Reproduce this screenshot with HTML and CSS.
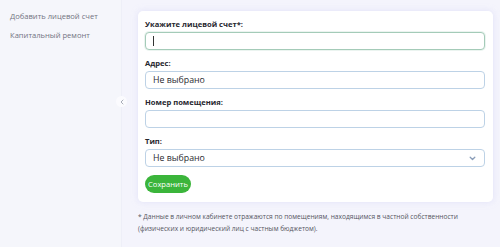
FILE: index.html
```html
<!DOCTYPE html>
<html lang="ru">
<head>
<meta charset="utf-8">
<link rel="stylesheet" href="styles.css">
</head>
<body>
<div class="layout">
  <aside class="sidebar">
    <a class="nav-item">Добавить лицевой счет</a>
    <a class="nav-item">Капитальный ремонт</a>
    <button class="collapse" type="button" aria-label="Свернуть">
      <svg width="6" height="6" viewBox="0 0 6 6"><path d="M4 1 L2 3 L4 5" fill="none" stroke="#a9adb8" stroke-width="1" stroke-linecap="round" stroke-linejoin="round"/></svg>
    </button>
  </aside>
  <main class="main">
    <form class="card">
      <div class="field">
        <label class="label">Укажите лицевой счет*:</label>
        <div class="input focused"><span class="caret"></span></div>
      </div>
      <div class="field">
        <label class="label">Адрес:</label>
        <div class="input">Не выбрано</div>
      </div>
      <div class="field">
        <label class="label">Номер помещения:</label>
        <div class="input"></div>
      </div>
      <div class="field">
        <label class="label">Тип:</label>
        <div class="input select">
          <span>Не выбрано</span>
          <svg class="chevron" width="7" height="5" viewBox="0 0 7 5"><path d="M1.2 1.2 L3.5 3.5 L5.8 1.2" fill="none" stroke="#8a9db8" stroke-width="1.3" stroke-linecap="round" stroke-linejoin="round"/></svg>
        </div>
      </div>
      <button class="save" type="button">Сохранить</button>
    </form>
    <p class="note">* Данные в личном кабинете отражаются по помещениям, находящимся в частной собственности<br>(физических и юридический лиц с частным бюджетом).</p>
  </main>
</div>
</body>
</html>
```

FILE: styles.css
```css
* { box-sizing: border-box; }
html, body { margin: 0; padding: 0; }
body {
  font-family: "Open Sans", "Noto Sans", sans-serif;
  color: #2b2b33;
  background: #f4f4fc;
  width: 500px;
  height: 247px;
  overflow: hidden;
}
.layout {
  display: flex;
  height: 247px;
}
.sidebar {
  position: relative;
  width: 122px;
  flex: none;
  background: #f5f6fb;
  border-right: 1px solid #eeeff8;
  padding: 11px 0 0 10px;
  display: flex;
  flex-direction: column;
  gap: 8px;
}
.nav-item {
  font-size: 7.6px;
  line-height: 11px;
  color: #727482;
}
.collapse {
  position: absolute;
  right: -6px;
  top: 96px;
  width: 11px;
  height: 11px;
  border-radius: 50%;
  border: none;
  background: #fbfbfe;
  padding: 0;
  display: flex;
  align-items: center;
  justify-content: center;
}
.main {
  flex: 1;
  padding: 11px 7px 0 16px;
}
.card {
  background: #fff;
  border-radius: 5px;
  box-shadow: 0 0 6px rgba(210, 210, 245, 0.55);
  padding: 8px 8px 9px 7px;
  display: flex;
  flex-direction: column;
  align-items: flex-start;
}
.field {
  width: 100%;
  display: flex;
  flex-direction: column;
  gap: 3px;
  margin-bottom: 8px;
}
.label {
  font-size: 7.6px;
  font-weight: 700;
  line-height: 10px;
  color: #26262e;
}
.input {
  height: 18px;
  width: 100%;
  border: 1px solid #bdd2e6;
  border-radius: 4px;
  background: #fff;
  padding: 0 8px 0 7px;
  font-size: 8.8px;
  line-height: 16px;
  color: #2a2a30;
  display: flex;
  align-items: center;
}
.input.focused {
  border-color: #a4cbb8;
  box-shadow: 0 0 0 1px rgba(190, 220, 205, 0.3);
}
.caret {
  width: 1px;
  height: 10px;
  background: #333;
}
.select {
  justify-content: space-between;
}
.chevron { flex: none; }
.save {
  height: 18px;
  width: 46px;
  border: none;
  border-radius: 9px;
  background: #3bb53b;
  color: #fff;
  font-family: inherit;
  font-size: 7.6px;
  padding: 0;
}
.note {
  margin: 9px 0 0 0;
  font-size: 6.6px;
  line-height: 12px;
  color: #55555f;
}
```
